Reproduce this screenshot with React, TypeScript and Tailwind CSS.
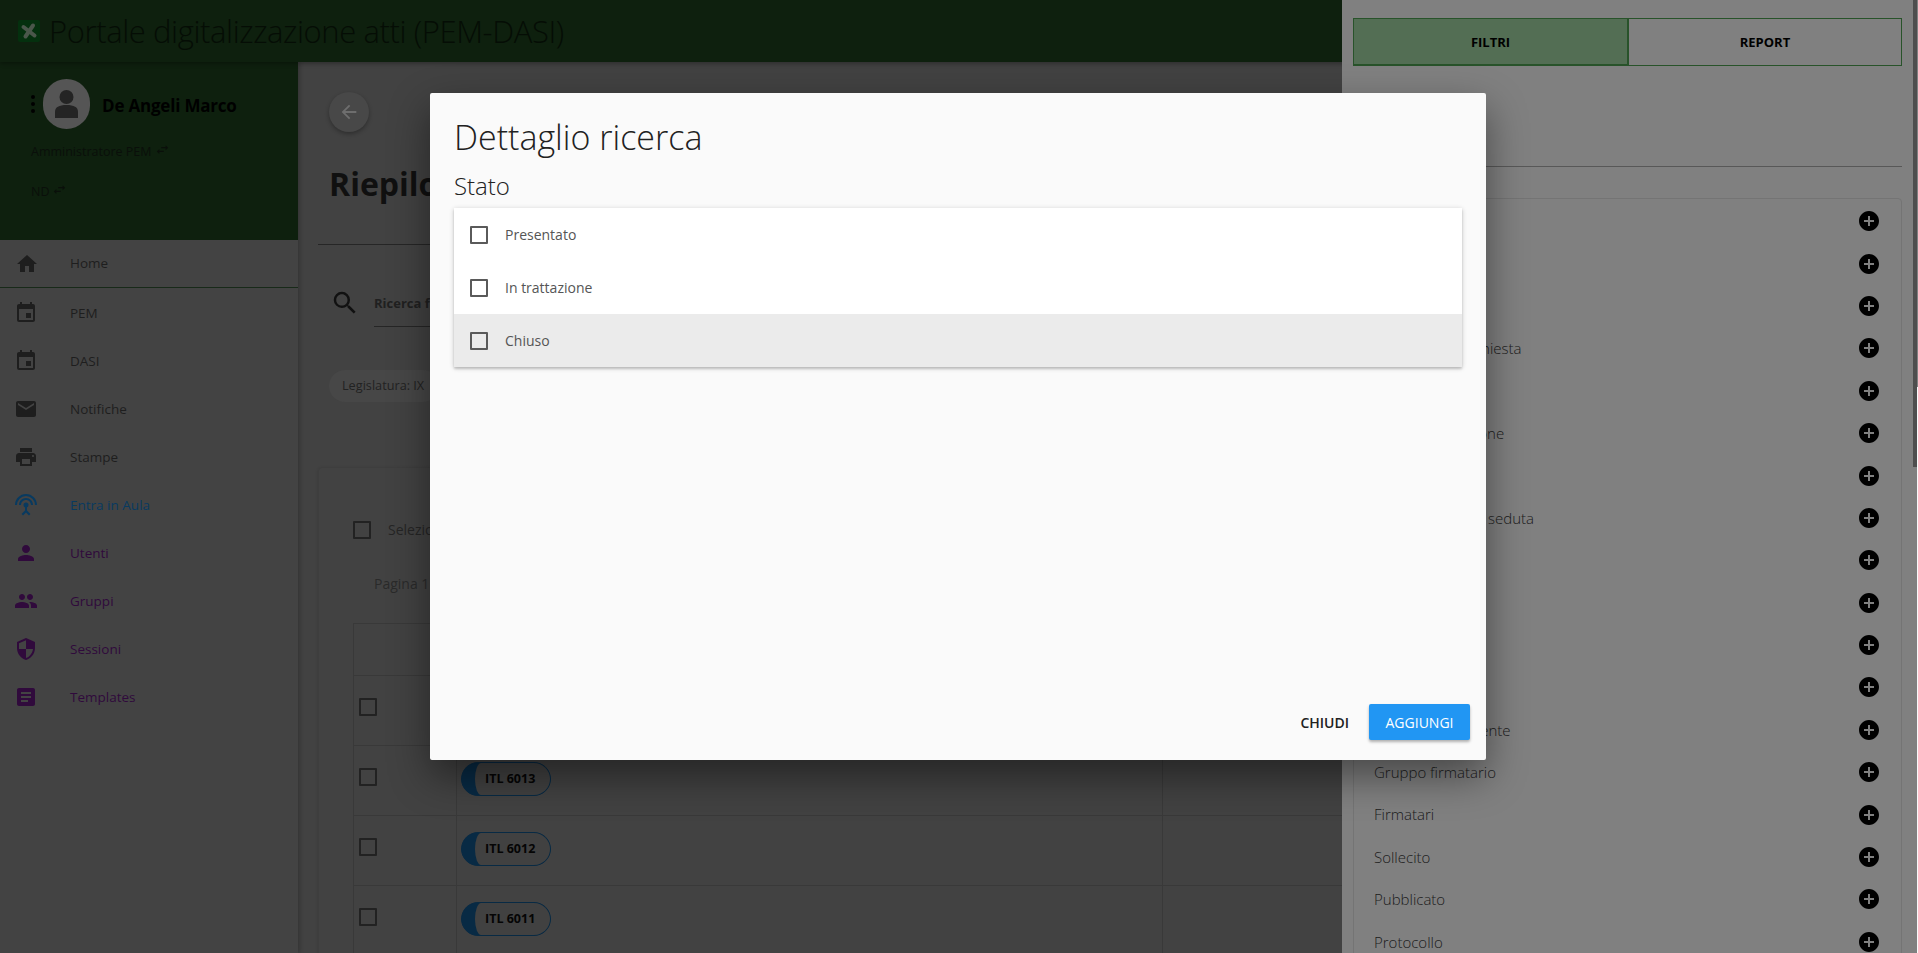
import {
  MdAddCircle,
  MdArrowBack,
  MdArticle,
  MdEmail,
  MdEvent,
  MdHome,
  MdPeople,
  MdPerson,
  MdPrint,
  MdSearch,
  MdSecurity,
  MdSettingsInputAntenna,
  MdSwapHoriz,
} from "react-icons/md";

const font = "font-['Open_Sans','Noto_Sans',sans-serif]";

const menu = [
  {label: "PEM", icon: MdEvent, color: "text-[#1e1e1e]"},
  {label: "DASI", icon: MdEvent, color: "text-[#1e1e1e]"},
  {label: "Notifiche", icon: MdEmail, color: "text-[#1e1e1e]"},
  {label: "Stampe", icon: MdPrint, color: "text-[#1e1e1e]"},
  {label: "Entra in Aula", icon: MdSettingsInputAntenna, color: "text-[#083a60]"},
  {label: "Utenti", icon: MdPerson, color: "text-[#300a3c]"},
  {label: "Gruppi", icon: MdPeople, color: "text-[#300a3c]"},
  {label: "Sessioni", icon: MdSecurity, color: "text-[#300a3c]"},
  {label: "Templates", icon: MdArticle, color: "text-[#300a3c]"},
];

const filtri = [
  "Legislatura",
  "Numero",
  "Tipo",
  "Tipo risposta richiesta",
  "Stato",
  "Data di discussione",
  "Oggetto",
  "Data d'iscrizione seduta",
  "Seduta",
  "Testo",
  "Partito",
  "Area",
  "Gruppo proponente",
  "Gruppo firmatario",
  "Firmatari",
  "Sollecito",
  "Pubblicato",
  "Protocollo",
];

function Checkbox({className = "border-[#5a5a5a]"}: {className?: string}) {
  return <div className={`w-[18px] h-[18px] border-2 rounded-[1px] ${className}`} />;
}

function Sidebar() {
  return (
    <aside className="w-[298px] shrink-0 h-[891px] bg-[#434343] shadow-[2px_0_4px_rgba(0,0,0,0.2)] z-10">
      <div className="h-[178px] bg-[#0e200e] pl-[31px] pt-[17px] text-black">
        <div className="flex items-center">
          <span className="w-1 flex flex-col gap-[3px]">
            <i className="w-1 h-1 rounded-full bg-black" />
            <i className="w-1 h-1 rounded-full bg-black" />
            <i className="w-1 h-1 rounded-full bg-black" />
          </span>
          <div className="w-[47px] h-[50px] ml-[8px] rounded-full bg-[#555] flex items-center justify-center">
            <svg viewBox="0 0 47 50" className="w-[47px] h-[50px]">
              <circle cx="23.5" cy="18" r="7" fill="#242424" />
              <path d="M12 39 L12 33 C12 28 16 26 23.5 26 C31 26 35 28 35 33 L35 39 Z" fill="#242424" />
            </svg>
          </div>
          <p className="ml-[12px] mt-[3px] text-[17px] font-bold tracking-[-0.2px]">De Angeli Marco</p>
        </div>
        <p className="mt-[11px] text-[12.5px] leading-[24px] flex items-center text-[#0a0f0a]">
          Amministratore PEM <MdSwapHoriz size={15} className="ml-[3px] -mt-[5px]" />
        </p>
        <p className="mt-[16px] text-[12.5px] leading-[24px] flex items-center text-[#0a0f0a]">
          ND <MdSwapHoriz size={15} className="ml-[3px] -mt-[5px]" />
        </p>
      </div>
      <div className="h-[48px] mb-px border-b border-[#182a19] flex items-center pl-[15px] text-[#1e1e1e] text-[13.5px] font-medium">
        <MdHome size={24} />
        <span className="ml-[31px]">Home</span>
      </div>
      {menu.map((m) => (
        <div key={m.label} className={`h-[48px] flex items-center pl-[14px] text-[13.5px] font-medium ${m.color}`}>
          <m.icon size={24} />
          <span className="ml-[32px]">{m.label}</span>
        </div>
      ))}
    </aside>
  );
}

function Pill({n}: {n: number}) {
  return (
    <div className="ml-[4px] mt-[16px] w-[90px] h-[34px] rounded-full border border-[#082a44] bg-[#082a44] overflow-hidden">
      <div className="ml-[13px] h-full bg-[#414141] rounded-l-[6px_50%] flex items-center pl-[10px]">
        <span className="text-[12.5px] font-bold text-[#050505] whitespace-nowrap">ITL {n}</span>
      </div>
    </div>
  );
}

function Main() {
  return (
    <main className="flex-1 h-[891px] bg-[#424242] pl-[20px] overflow-hidden text-[#202020]">
      <div className="ml-[11px] mt-[30px] w-10 h-10 rounded-full bg-[#484848] text-[#6e6e6e] flex items-center justify-center shadow-[0_2px_4px_rgba(0,0,0,0.3)]">
        <MdArrowBack size={22} />
      </div>
      <h1 className="ml-[11px] mt-[28px] text-[32px] leading-[48px] font-bold text-[#101010]">Riepilogo atti</h1>
      <div className="mt-[36px] border-t border-[#262626]" />
      <div className="mt-[43px] ml-[12px] flex items-start">
        <MdSearch size={30} className="text-[#111]" />
        <div className="ml-[14px] w-[400px] h-[39px] border-b border-[#262626] text-[13px] leading-[30px] font-bold">
          Ricerca full text
        </div>
      </div>
      <div className="mt-[43px] ml-[11px] w-[110px] h-8 rounded-full bg-[#474747] flex items-center pl-[13px] text-[12.7px] text-[#222]">
        Legislatura: IX
      </div>
      <div className="mt-[65px] border border-[#3e3e3e] rounded-sm shadow-[0_1px_3px_rgba(0,0,0,0.15)] pl-[34px] pt-[52px] h-[600px]">
        <div className="flex items-center h-[19px]">
          <Checkbox className="border-[#222]" />
          <span className="ml-[17px] text-[14px] text-[#252525]">Seleziona tutti</span>
        </div>
        <p className="ml-[21px] mt-[35px] text-[14px] leading-[19px] text-[#2a2a2a]">Pagina 1 di 100</p>
        <div className="mt-[30px] border-l border-t border-[#393939]">
          <div className="h-[52px] border-b border-[#393939]" />
          {[6014, 6013, 6012, 6011].map((n) => (
            <div key={n} className="h-[70px] border-b border-[#393939] flex">
              <div className="w-[103px] border-r border-[#393939] pl-[5px] pt-[22px]">
                <Checkbox className="border-[#222]" />
              </div>
              <div className="w-[706px] border-r border-[#393939]">
                <Pill n={n} />
              </div>
            </div>
          ))}
        </div>
      </div>
    </main>
  );
}

function PanelFiltri() {
  return (
    <aside className="absolute z-30 top-0 right-0 bottom-0 w-[576px] bg-[#808080] pl-[11px] pr-[16px] pt-[18px] overflow-hidden">
      <div className="flex h-[48px] border border-[#28532a] text-[13px] font-bold text-black">
        <div className="w-[275px] pt-[2px] bg-[#536e54] border-r-2 border-b border-[#28532a] flex items-center justify-center">FILTRI</div>
        <div className="flex-1 pt-[2px] flex items-center justify-center">REPORT</div>
      </div>
      <div className="mt-[100px] border-t border-[#585858]" />
      <div className="mt-[31px] border border-[#747474] rounded-sm pl-[20px] pr-[20px] pt-[1px]">
        {filtri.map((f) => (
          <div key={f} className="h-[42.4px] flex items-center justify-between text-[15px] font-light text-[#1a1a1a]">
            <span>{f}</span>
            <MdAddCircle size={24} className="text-black" />
          </div>
        ))}
      </div>
      <div className="absolute top-0 right-px w-1 h-[467px] bg-[#4e4e4e]" />
      <div className="absolute top-[387px] bottom-0 right-0 w-px bg-[#fafafa]" />
    </aside>
  );
}

function Dettaglio() {
  return (
    <div className="absolute z-40 left-[430px] top-[93px] w-[1056px] h-[667px] bg-[#fafafa] rounded-[2px] shadow-[0_16px_40px_rgba(0,0,0,0.45)] flex flex-col px-[24px] pt-[23px] pb-[20px]">
      <h4 className="text-[34px] leading-[42px] font-light text-[#212121] whitespace-nowrap">Dettaglio ricerca</h4>
      <p className="mt-[12px] text-[24px] leading-[32px] font-light text-[#212121]">Stato</p>
      <ul className="mt-[6px] bg-white shadow-[0_2px_2px_rgba(0,0,0,0.14),0_1px_5px_rgba(0,0,0,0.2)]">
        {["Presentato", "In trattazione", "Chiuso"].map((s, i) => (
          <li key={s} className={`h-[53px] flex items-center pl-[16px] text-[14px] text-[#555] ${i === 2 ? "bg-[#ebebeb]" : ""}`}>
            <Checkbox />
            <span className="ml-[17px]">{s}</span>
          </li>
        ))}
      </ul>
      <div className="mt-auto flex items-center justify-end gap-[4px] -mr-[8px]">
        <button className="h-9 px-4 text-[14px] font-semibold text-[#212121]">CHIUDI</button>
        <button className="h-9 w-[101px] rounded-[2px] bg-[#2196f3] text-white text-[14px] shadow-[0_2px_3px_rgba(0,0,0,0.3)]">AGGIUNGI</button>
      </div>
    </div>
  );
}

export default function App() {
  return (
    <div className={`relative w-[1918px] h-[953px] overflow-hidden bg-[#424242] ${font}`}>
      <header className="h-[62px] bg-[#0e200e] flex items-center pl-[18px] shadow-[0_2px_4px_rgba(0,0,0,0.3)] relative z-20">
        <div className="w-[22px] h-[22px] rounded-[2px] bg-[#04300e]">
          <svg viewBox="0 0 22 22" className="w-[22px] h-[22px]">
            <g stroke="#4a574b" strokeWidth="4" strokeLinecap="round">
              <path d="M5.5 7 L16.5 15.5" />
              <path d="M15 5.5 L7.5 16.5" />
            </g>
          </svg>
        </div>
        <span className="ml-[9px] text-[31px] font-light tracking-[-0.4px] text-[#050d05] whitespace-nowrap">Portale digitalizzazione atti (PEM-DASI)</span>
      </header>
      <div className="flex">
        <Sidebar />
        <Main />
      </div>
      <PanelFiltri />
      <Dettaglio />
    </div>
  );
}
